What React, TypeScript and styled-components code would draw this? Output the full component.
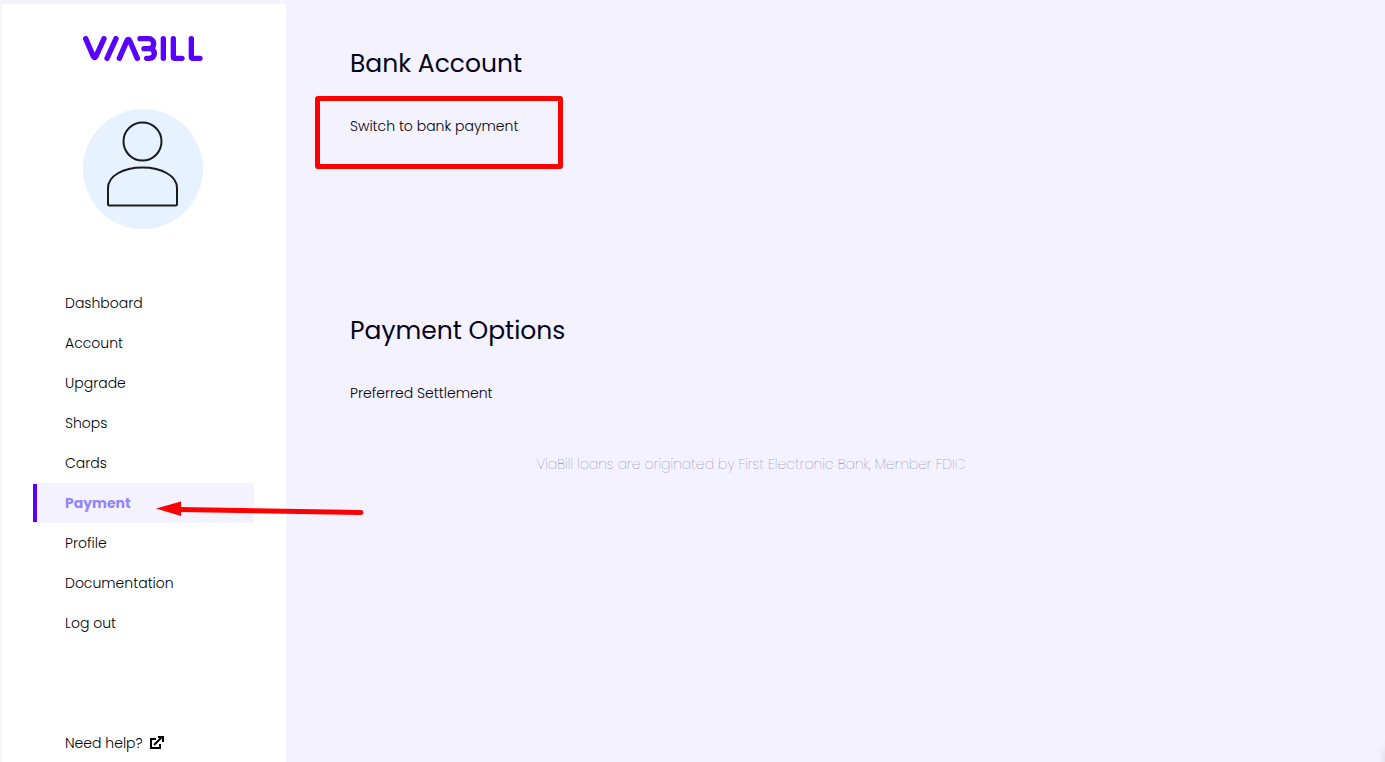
import React from "react";
import styled, { createGlobalStyle } from "styled-components";

const GlobalStyle = createGlobalStyle`
  *, *::before, *::after { box-sizing: border-box; }
  body {
    margin: 0;
    background: #f4f2ff;
    color: #000008;
    font-family: Poppins, Inter, "Liberation Sans", sans-serif;
    font-size: 14px;
    font-weight: 300;
    line-height: 24px;
  }
`;

const Page = styled.div`
  display: flex;
  min-height: 100vh;
  padding: 4px 0 0 1px;
  overflow: hidden;
`;

const Sidebar = styled.aside`
  flex: 0 0 285px;
  display: flex;
  flex-direction: column;
  padding: 32px 32px 0;
  background: #fff;
`;

const Brand = styled.div`
  display: flex;
  flex-direction: column;
  gap: 48px;
  padding-left: 50px;
`;

const LogoLink = styled.a`
  display: block;
  height: 25px;
  svg { display: block; }
`;

const Avatar = styled.div`
  width: 120px;
  height: 120px;
  border-radius: 50%;
  background: #e6f2ff;
  svg { display: block; }
`;

const Nav = styled.nav`
  margin-top: 54px;
`;

const NavList = styled.ul`
  margin: 0;
  padding: 0;
  list-style: none;
`;

const NavItem = styled.li`
  position: relative;
`;

const NavLink = styled.a<{ $active?: boolean }>`
  position: relative;
  display: flex;
  align-items: center;
  gap: 7px;
  height: 40px;
  padding-left: 32px;
  background: ${(p) => (p.$active ? "#f4f2ff" : "transparent")};
  color: ${(p) => (p.$active ? "#9385ff" : "inherit")};
  font-weight: ${(p) => (p.$active ? 700 : 300)};
  text-decoration: none;

  &::before {
    content: "";
    position: absolute;
    inset: 1px auto 1px 0;
    width: 4px;
    background: ${(p) => (p.$active ? "#5a00ff" : "transparent")};
  }
`;

const Help = styled.div`
  margin-top: 80px;
`;

const Arrow = styled.svg`
  position: absolute;
  left: 122px;
  top: 16px;
  z-index: 1;
  pointer-events: none;
`;

const Main = styled.main`
  flex: 1;
  min-width: 0;
  padding: 40px 64px 0;
`;

const Content = styled.div`
  max-width: 802px;
`;

const Section = styled.section<{ $tall?: boolean }>`
  min-height: ${(p) => (p.$tall ? "267px" : "0")};
`;

const Title = styled.h1`
  margin: 0 0 30px;
  color: #04041f;
  font-size: 25px;
  font-weight: 400;
  line-height: 40px;
`;

const Option = styled.a`
  position: relative;
  display: inline-block;
  color: inherit;
  text-decoration: none;
`;

const Highlight = styled.span`
  position: absolute;
  left: -35px;
  top: -18px;
  width: 248px;
  height: 73px;
  border: 5px solid #f00;
  border-radius: 3px;
  pointer-events: none;
`;

const Notice = styled.p`
  margin: 47px 0 0;
  color: #5c659c;
  font-weight: 200;
  text-align: center;
`;

const CornerShadow = styled.div`
  position: fixed;
  right: -22px;
  bottom: -10px;
  width: 20px;
  height: 26px;
  border-radius: 10px;
  box-shadow: 0 0 12px rgba(0, 0, 0, 0.2);
`;

const Logo = () => (
  <svg width="120" height="25" viewBox="39 33 360 75" fill="none" stroke="#5a00ff" strokeWidth="16" strokeLinecap="round" strokeLinejoin="round" role="img" aria-label="ViaBill">
    <path d="M47 41 L69 92 Q74 103 79 92 L102 41" />
    <path d="M138 41 L111 100" />
    <path d="M148 100 L170 49 Q175 38 180 49 L202 100" />
    <path d="M210 41 H236 C256 41 256 71 236 71 H222 M238 71 C258 71 258 100 238 100 H230" />
    <path d="M280 41 V100" />
    <path d="M310 41 V95 Q310 100 315 100 H336" />
    <path d="M364 41 V95 Q364 100 369 100 H390" />
  </svg>
);

const Person = () => (
  <svg width="120" height="120" viewBox="0 0 120 120" fill="none" stroke="#1b1b1b" strokeWidth="2" aria-hidden="true">
    <circle cx="59.5" cy="32.5" r="19" />
    <path d="M25 95 V79 C25 67 40 58.500 59.500 58.500 C79 58.500 94 67 94 79 V95 Q94 96.500 92.500 96.500 H26.500 Q25 96.500 25 95 Z" />
  </svg>
);

const ExternalIcon = () => (
  <svg width="14" height="16" viewBox="0 0 14 16" fill="none" stroke="#000" strokeWidth="2" aria-hidden="true">
    <path d="M6 4 H1 V13 H10 V9" />
    <path d="M4 10 L12 2" />
    <path d="M8 2 H13 V7" />
  </svg>
);

const pages = ["Dashboard", "Account", "Upgrade", "Shops", "Cards", "Payment", "Profile", "Documentation", "Log out"];

export default function App() {
  return (
    <>
      <GlobalStyle />
      <Page>
        <Sidebar>
          <Brand>
            <LogoLink href="#"><Logo /></LogoLink>
            <Avatar><Person /></Avatar>
          </Brand>
          <Nav>
            <NavList>
              {pages.map((label) => {
                const active = label === "Payment";
                return (
                  <NavItem key={label}>
                    <NavLink href="#" $active={active} aria-current={active ? "page" : undefined}>{label}</NavLink>
                    {active && (
                      <Arrow width="210" height="22" viewBox="0 0 210 22" aria-hidden="true">
                        <path d="M24 10.500 L206 13.500" stroke="#f00" strokeWidth="5" strokeLinecap="round" />
                        <path d="M1 9.500 L26 2.500 V17 Z" fill="#f00" />
                      </Arrow>
                    )}
                  </NavItem>
                );
              })}
            </NavList>
          </Nav>
          <Help>
            <NavLink href="#">Need help? <ExternalIcon /></NavLink>
          </Help>
        </Sidebar>
        <Main>
          <Content>
            <Section $tall>
              <Title>Bank Account</Title>
              <Option href="#">Switch to bank payment<Highlight /></Option>
            </Section>
            <Section>
              <Title as="h2">Payment Options</Title>
              <Option href="#">Preferred Settlement</Option>
            </Section>
            <Notice>ViaBill loans are originated by First Electronic Bank, Member FDIC</Notice>
          </Content>
        </Main>
      </Page>
      <CornerShadow />
    </>
  );
}
